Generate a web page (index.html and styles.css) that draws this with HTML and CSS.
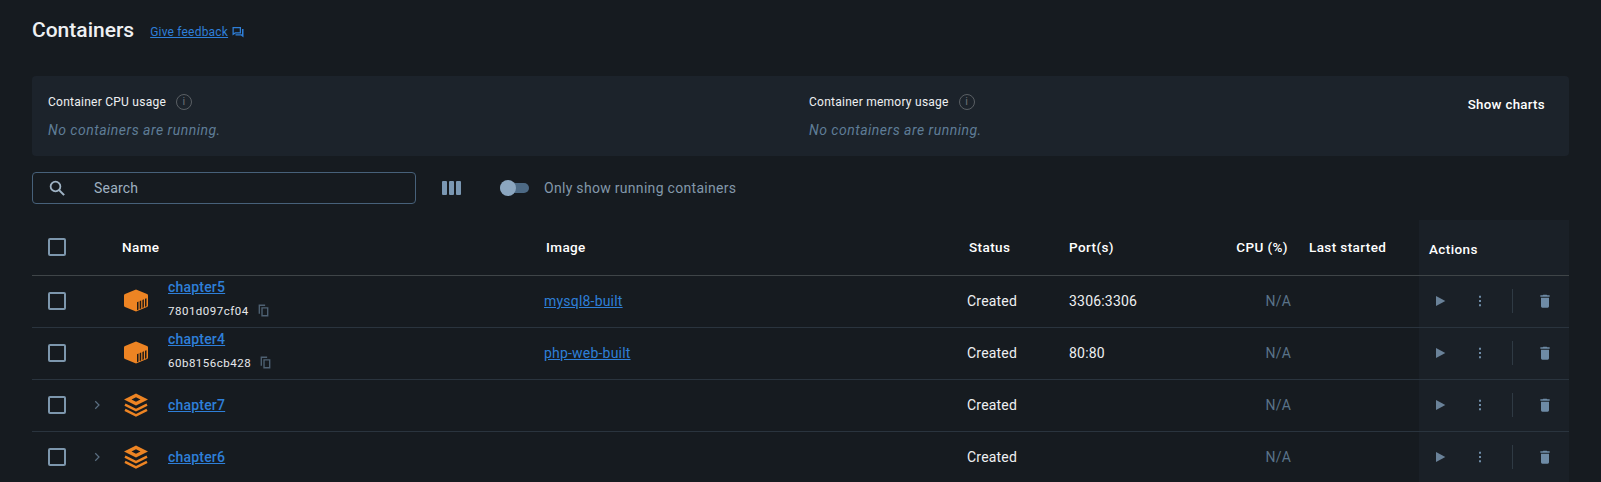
FILE: index.html
```html
<!DOCTYPE html>
<html lang="en">
<head>
    <meta charset="UTF-8">
    <title>Containers</title>
    <link rel="stylesheet" href="styles.css">
</head>
<body>
    <svg class="sprites" width="0" height="0">
        <symbol id="ic-box" viewBox="0 0 24 24">
            <path d="M12 .5 23 5a1.500 1.500 0 0 1 1 1.400v10.200a1.500 1.500 0 0 1-1 1.400l-11 4.500L1 18a1.500 1.500 0 0 1-1-1.400V6.400A1.500 1.500 0 0 1 1 5z" fill="#ed8423"/>
            <path d="M13 13.200l1.500-.6v8l-1.500.6zM15.700 12l1.500-.6v8l-1.500.6zM18.400 10.900l1.500-.6v8l-1.500.6zM21 9.800l1.500-.6v8l-1.500.6z" fill="#1d1a18"/>
        </symbol>
        <symbol id="ic-stack" viewBox="0 0 24 24">
            <path d="M12 .5 24 6.500l-12 6-12-6zm0 3.700L7.500 6.500l4.500 2.200 4.500-2.200z" fill="#ed8423" fill-rule="evenodd"/>
            <path d="M1 11.600 12 17l11-5.400M1 16.900l11 5.400 11-5.400" fill="none" stroke="#ed8423" stroke-width="2.500"/>
        </symbol>
        <symbol id="ic-play" viewBox="0 0 24 24"><path d="M6 4.500v15L20 12z"/></symbol>
        <symbol id="ic-more" viewBox="0 0 24 24"><path d="M10.500 4h3v3h-3zM10.500 10.500h3v3h-3zM10.500 17h3v3h-3z"/></symbol>
        <symbol id="ic-trash" viewBox="0 0 24 24"><path d="M6 20a2 2 0 0 0 2 2h8a2 2 0 0 0 2-2V7H6zM19 3.500h-3.500l-1-1h-5l-1 1H5v2h14z"/></symbol>
        <symbol id="ic-copy" viewBox="0 0 24 24">
            <path d="M3 1h12v2.500H5.500V18H3z" fill="#4e6172"/>
            <path d="M8 6h13v17H8zm2.500 2.500v12h8v-12z" fill="#4e6172" fill-rule="evenodd"/>
        </symbol>
        <symbol id="ic-chev" viewBox="0 0 24 24"><path d="M8.500 4.500 16 12l-7.500 7.500" fill="none" stroke="#5b6f82" stroke-width="2.400"/></symbol>
    </svg>

    <div class="page">
        <header class="top">
            <h1>Containers</h1>
            <a class="feedback" href="#">Give feedback</a>
            <svg class="feedback-icon" viewBox="0 0 24 24"><path d="M1 2h17v13H7l-6 4zm2.500 2.500v9.500L6.500 12.500h9v-8z" fill="#2e7fd8" fill-rule="evenodd"/><path d="M20 6h3v17l-5-4H7v-2.500h13z" fill="#2e7fd8"/></svg>
        </header>

        <section class="stats">
            <div class="stat stat-cpu">
                <div class="stat-title">Container CPU usage <span class="info">i</span></div>
                <div class="stat-empty">No containers are running.</div>
            </div>
            <div class="stat stat-mem">
                <div class="stat-title">Container memory usage <span class="info">i</span></div>
                <div class="stat-empty">No containers are running.</div>
            </div>
            <button class="show-charts">Show charts</button>
        </section>

        <div class="toolbar">
            <label class="search">
                <svg viewBox="0 0 24 24"><circle cx="10" cy="10" r="6.500" fill="none" stroke="#9fb3c4" stroke-width="2.400"/><path d="m14.500 14.500 7 7" stroke="#9fb3c4" stroke-width="2.800"/></svg>
                <span>Search</span>
            </label>
            <div class="columns-btn"><i></i><i></i><i></i></div>
            <div class="switch"><span class="knob"></span></div>
            <span class="switch-label">Only show running containers</span>
        </div>

        <table>
            <colgroup>
                <col class="c-check"><col class="c-exp"><col class="c-name"><col class="c-image">
                <col class="c-status"><col class="c-ports"><col class="c-cpu"><col class="c-last"><col class="c-actions">
            </colgroup>
            <thead>
                <tr>
                    <th><span class="check"></span></th>
                    <th></th>
                    <th>Name</th>
                    <th class="nudge">Image</th>
                    <th class="nudge">Status</th>
                    <th>Port(s)</th>
                    <th class="num">CPU (%)</th>
                    <th>Last started</th>
                    <th class="actions">Actions</th>
                </tr>
            </thead>
            <tbody>
                <tr>
                    <td><span class="check"></span></td>
                    <td></td>
                    <td>
                        <div class="name-cell">
                            <svg class="kind"><use href="#ic-box"/></svg>
                            <div class="name-text">
                                <a class="name" href="#">chapter5</a>
                                <div class="cid">7801d097cf04 <svg class="copy"><use href="#ic-copy"/></svg></div>
                            </div>
                        </div>
                    </td>
                    <td><a class="image" href="#">mysql8-built</a></td>
                    <td>Created</td>
                    <td>3306:3306</td>
                    <td class="num na">N/A</td>
                    <td></td>
                    <td class="actions">
                        <div class="btns">
                            <svg class="play"><use href="#ic-play"/></svg>
                            <svg class="more"><use href="#ic-more"/></svg>
                            <span class="sep"></span>
                            <svg class="trash"><use href="#ic-trash"/></svg>
                        </div>
                    </td>
                </tr>
                <tr>
                    <td><span class="check"></span></td>
                    <td></td>
                    <td>
                        <div class="name-cell">
                            <svg class="kind"><use href="#ic-box"/></svg>
                            <div class="name-text">
                                <a class="name" href="#">chapter4</a>
                                <div class="cid">60b8156cb428 <svg class="copy"><use href="#ic-copy"/></svg></div>
                            </div>
                        </div>
                    </td>
                    <td><a class="image" href="#">php-web-built</a></td>
                    <td>Created</td>
                    <td>80:80</td>
                    <td class="num na">N/A</td>
                    <td></td>
                    <td class="actions">
                        <div class="btns">
                            <svg class="play"><use href="#ic-play"/></svg>
                            <svg class="more"><use href="#ic-more"/></svg>
                            <span class="sep"></span>
                            <svg class="trash"><use href="#ic-trash"/></svg>
                        </div>
                    </td>
                </tr>
                <tr>
                    <td><span class="check"></span></td>
                    <td><svg class="chev"><use href="#ic-chev"/></svg></td>
                    <td>
                        <div class="name-cell">
                            <svg class="kind"><use href="#ic-stack"/></svg>
                            <a class="name" href="#">chapter7</a>
                        </div>
                    </td>
                    <td></td>
                    <td>Created</td>
                    <td></td>
                    <td class="num na">N/A</td>
                    <td></td>
                    <td class="actions">
                        <div class="btns">
                            <svg class="play"><use href="#ic-play"/></svg>
                            <svg class="more"><use href="#ic-more"/></svg>
                            <span class="sep"></span>
                            <svg class="trash"><use href="#ic-trash"/></svg>
                        </div>
                    </td>
                </tr>
                <tr>
                    <td><span class="check"></span></td>
                    <td><svg class="chev"><use href="#ic-chev"/></svg></td>
                    <td>
                        <div class="name-cell">
                            <svg class="kind"><use href="#ic-stack"/></svg>
                            <a class="name" href="#">chapter6</a>
                        </div>
                    </td>
                    <td></td>
                    <td>Created</td>
                    <td></td>
                    <td class="num na">N/A</td>
                    <td></td>
                    <td class="actions">
                        <div class="btns">
                            <svg class="play"><use href="#ic-play"/></svg>
                            <svg class="more"><use href="#ic-more"/></svg>
                            <span class="sep"></span>
                            <svg class="trash"><use href="#ic-trash"/></svg>
                        </div>
                    </td>
                </tr>
            </tbody>
        </table>
    </div>
</body>
</html>
```

FILE: styles.css
```css
* {
    margin: 0;
    padding: 0;
    box-sizing: border-box;
    font-family: 'Roboto', sans-serif;
}

html, body {
    height: 482px;
    overflow: hidden;
}

body {
    background-color: #161b20;
    color: #eef0f2;
    font-size: 14px;
    letter-spacing: 0.2px;
}

a {
    color: #2e7fd8;
}

svg {
    display: block;
}

.sprites {
    position: absolute;
}

.page {
    width: 1569px;
    margin-left: 32px;
}

/* header */
.top {
    display: flex;
    align-items: center;
    height: 60px;
}

.top h1 {
    font-size: 21px;
    font-weight: 500;
    letter-spacing: 0;
}

.feedback {
    margin-left: 16px;
    margin-top: 3px;
    font-size: 12px;
    letter-spacing: 0.2px;
}

.feedback-icon {
    width: 12px;
    height: 12px;
    margin-left: 4px;
    margin-top: 3px;
}

/* stats */
.stats {
    display: flex;
    height: 80px;
    width: 1537px;
    margin-top: 16px;
    background-color: #1c232b;
    border-radius: 4px;
    padding: 17px 16px 16px;
}

.stat-cpu {
    width: 761px;
}

.stat-mem {
    width: 0;
    flex: 1;
}

.stat-title {
    display: flex;
    align-items: center;
    height: 18px;
    font-size: 12px;
    letter-spacing: 0.25px;
    white-space: nowrap;
}

.info {
    width: 16px;
    height: 16px;
    margin-left: 10px;
    border: 1.500px solid #5a5f64;
    border-radius: 50%;
    color: #6a7076;
    font-size: 11px;
    line-height: 13px;
    text-align: center;
}

.stat-empty {
    margin-top: 11px;
    font-size: 14px;
    letter-spacing: 0.5px;
    font-style: italic;
    color: #5f7d97;
}

.show-charts {
    align-self: flex-start;
    margin: 4px 8px 0 0;
    background: none;
    border: none;
    color: #fff;
    font-size: 13.300px;
    font-weight: 500;
    letter-spacing: 0.3px;
}

/* toolbar */
.toolbar {
    display: flex;
    align-items: center;
    height: 32px;
    margin-top: 16px;
}

.search {
    display: flex;
    align-items: center;
    width: 384px;
    height: 32px;
    padding-left: 15px;
    border: 1px solid #47617a;
    border-radius: 4px;
    color: #9fb1c0;
    font-size: 14px;
}

.search svg {
    width: 18px;
    height: 18px;
    margin-right: 28px;
}

.columns-btn {
    display: flex;
    gap: 2px;
    margin-left: 26px;
}

.columns-btn i {
    width: 5px;
    height: 14px;
    background-color: #7a97b2;
    border-radius: 1px;
}

.switch {
    position: relative;
    width: 29px;
    height: 10px;
    margin-left: 39px;
    background-color: #4d6a85;
    border-radius: 5px;
}

.knob {
    position: absolute;
    left: 0;
    top: -3px;
    width: 16px;
    height: 16px;
    background-color: #8ba6bf;
    border-radius: 50%;
}

.switch-label {
    margin-left: 15px;
    color: #8398aa;
    letter-spacing: 0.3px;
}

/* table */
table {
    width: 1537px;
    margin-top: 16px;
    table-layout: fixed;
    border-collapse: collapse;
}

.c-check { width: 58px; }
.c-exp { width: 32px; }
.c-name { width: 422px; }
.c-image { width: 423px; }
.c-status { width: 102px; }
.c-ports { width: 131px; }
.c-cpu { width: 109px; }
.c-last { width: 110px; }
.c-actions { width: 150px; }

th {
    height: 55px;
    text-align: left;
    color: #fff;
    font-size: 13.500px;
    font-weight: 500;
    letter-spacing: 0.4px;
    border-bottom: 1px solid #3f4548;
}

th.nudge {
    padding-left: 2px;
}

td {
    height: 52px;
    border-bottom: 1px solid #2a343e;
    vertical-align: middle;
}

tbody tr:last-child td {
    border-bottom: none;
}

th:first-child, td:first-child {
    padding-left: 16px;
}

.check {
    display: block;
    width: 18px;
    height: 18px;
    border: 2px solid #7d97ad;
    border-radius: 2px;
}

.chev {
    width: 12px;
    height: 12px;
    margin-left: 1px;
}

.name-cell {
    display: flex;
    align-items: center;
    gap: 20px;
    margin-left: 2px;
}

.kind {
    width: 24px;
    height: 24px;
    flex: none;
}

.name-text {
    margin-bottom: 6px;
}

.name {
    font-size: 14px;
    font-weight: 500;
    letter-spacing: 0.2px;
}

.cid {
    display: flex;
    align-items: center;
    gap: 8px;
    margin-top: 9px;
    font-size: 11.500px;
    letter-spacing: 0.5px;
    color: #e6e9ec;
}

.copy {
    width: 13px;
    height: 13px;
}

.num {
    text-align: right;
    padding-right: 21px;
}

td.na {
    padding-right: 18px;
    color: #5a7389;
}

th.actions, td.actions {
    background-color: #1a2027;
}

th.actions {
    padding: 3px 0 0 10px;
}

.btns {
    display: flex;
    align-items: center;
    fill: #6e8ba6;
}

.play {
    width: 16px;
    height: 16px;
    margin-left: 13px;
    fill: #6a8299;
}

.more {
    width: 16px;
    height: 16px;
    margin-left: 24px;
}

.sep {
    width: 1px;
    height: 24px;
    margin-left: 24px;
    background-color: #2f3a44;
}

.trash {
    width: 16px;
    height: 16px;
    margin-left: 24px;
}
```
